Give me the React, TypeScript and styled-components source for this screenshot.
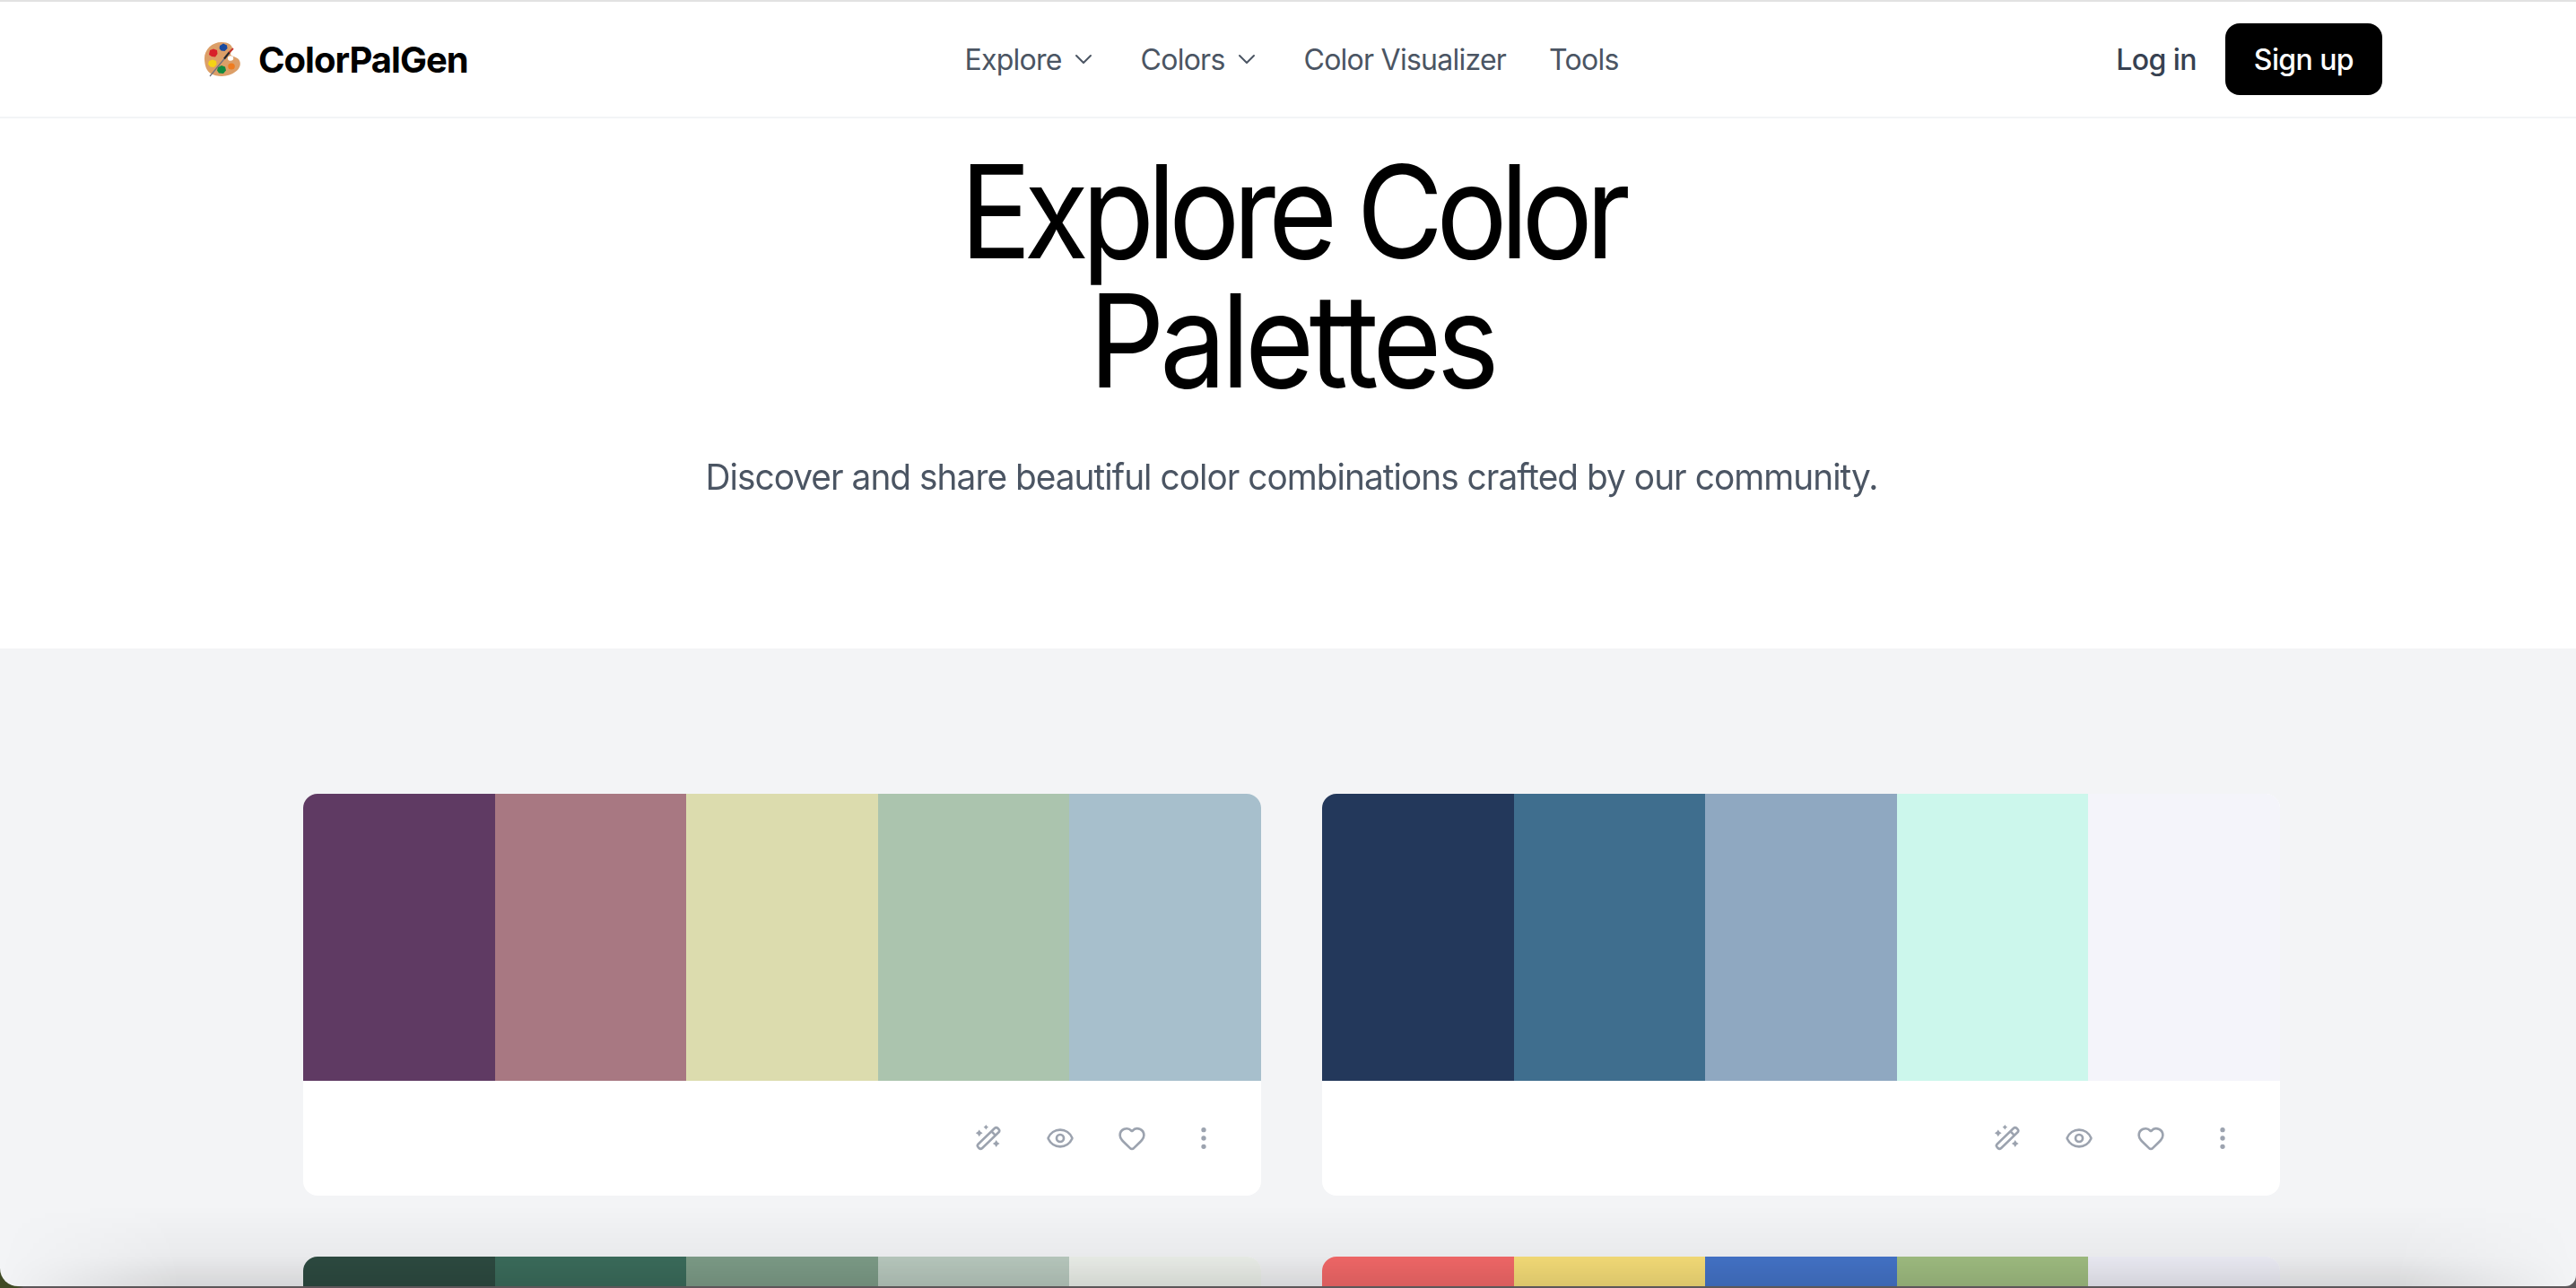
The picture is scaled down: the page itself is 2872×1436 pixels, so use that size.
import React from 'react';
import styled, { createGlobalStyle } from 'styled-components';
import { ChevronDown, Eye, Heart, MoreVertical } from 'lucide-react';

const GlobalStyle = createGlobalStyle`
    html, body {
        margin: 0;
        padding: 0;
        background: linear-gradient(to right, #3f4a24 0, #3f4a24 18px, #5c5759 26px);
    }
    * {
        box-sizing: border-box;
    }
`;

const Frame = styled.div`
    position: relative;
    width: 2872px;
    height: 1434px;
    overflow: hidden;
    border-radius: 0 0 12px 20px;
    background: #f3f4f6;
    font-family: Inter, "Liberation Sans", sans-serif;

    &::after {
        content: '';
        position: absolute;
        left: 0;
        right: 0;
        bottom: 0;
        height: 90px;
        pointer-events: none;
        background: linear-gradient(to top, rgba(0, 0, 0, 0.12), rgba(0, 0, 0, 0.04) 34px, rgba(0, 0, 0, 0));
        mask-image: linear-gradient(to right, transparent, #000 200px, #000 calc(100% - 200px), transparent);
    }
`;

// the captured page was a little wider than the window
const Page = styled.div`
    width: 2880px;
`;

const TopEdge = styled.div`
    height: 2px;
    background: #e2e2e2;
`;

const Nav = styled.nav`
    height: 130px;
    padding: 0 224px;
    display: grid;
    grid-template-columns: 1fr auto 1fr;
    align-items: center;
    background: #fff;
    border-bottom: 2px solid #f3f4f6;
`;

const Brand = styled.div`
    display: flex;
    align-items: center;
    gap: 18px;
    padding-left: 2px;
    font-size: 40px;
    font-weight: 700;
    letter-spacing: -1px;
    color: #000;
`;

const NavLinks = styled.div`
    display: flex;
    align-items: center;
    gap: 48px;
`;

const NavLink = styled.a`
    display: flex;
    align-items: center;
    gap: 8px;
    font-size: 32px;
    font-weight: 400;
    letter-spacing: -0.75px;
    color: #4b5563;
`;

const NavActions = styled.div`
    display: flex;
    align-items: center;
    justify-content: flex-end;
    gap: 32px;
`;

const LogIn = styled.a`
    font-size: 32px;
    font-weight: 500;
    letter-spacing: -0.6px;
    color: #374151;
`;

const SignUp = styled.a`
    display: flex;
    align-items: center;
    height: 80px;
    padding: 0 32px;
    border-radius: 16px;
    background: #000;
    color: #fff;
    font-size: 32px;
    font-weight: 500;
    letter-spacing: -0.6px;
`;

const Hero = styled.header`
    height: 591px;
    background: #fff;
    text-align: center;
    padding-top: 32px;
`;

// the reference has Inter's narrower display cut, the installed Inter does not
const Title = styled.h1`
    margin: 0 auto;
    width: 1000px;
    font-size: 144px;
    line-height: 144px;
    font-weight: 400;
    transform: scaleX(0.92);
    color: #000;
`;

const TitleLine = styled.span<{ $tracking: number }>`
    display: block;
    letter-spacing: ${(p) => p.$tracking}px;
`;

const Lead = styled.p`
    margin: 52px 0 0;
    font-size: 40px;
    line-height: 56px;
    letter-spacing: -1px;
    transform: scaleX(0.97);
    color: #4b5563;
`;

const Gallery = styled.main`
    display: grid;
    grid-template-columns: 1068px 1068px;
    justify-content: center;
    gap: 68px;
    padding-top: 162px;
`;

const Card = styled.article`
    height: 448px;
    border-radius: 16px;
    overflow: hidden;
    background: #fff;
`;

const Swatches = styled.div`
    display: flex;
    height: 320px;
`;

const Swatch = styled.div<{ $color: string }>`
    flex: 1;
    background: ${(p) => p.$color};
`;

const CardActions = styled.div`
    display: flex;
    justify-content: flex-end;
    align-items: center;
    gap: 48px;
    height: 128px;
    padding-right: 48px;
    color: #9ca3af;
`;

const palettes = [
    ['#5f3a63', '#a87882', '#dcdcae', '#abc4ae', '#a7bfcc'],
    ['#23385b', '#3f6e8e', '#8fa8c1', '#ccf7ec', '#f4f4fa'],
    ['#2e4c42', '#3c6e5d', '#7f9f8a', '#bccdc2', '#f0f4ee'],
    ['#f76a6a', '#fae17a', '#4575cb', '#a2c083', '#f1f1fa'],
];

// colour emoji palette, there is no emoji font on the page
const PaletteLogo = () => (
    <svg width="44" height="44" viewBox="6 8 44 44">
        <path d="M8 31C7 20 16 11 27 11C34 11 39 14 39 18C39 21 37 22 37 24C37 27 43 27 46 30C50 35 47 42 41 45C34 50 22 50 15 46C10 43 8.5 37 8 31Z" fill="#dc9f68" />
        <path d="M14 20l4-1.5 4 1.5 .5 4-2.5 3.5-4-.5-3-2z" fill="#d8202a" />
        <path d="M25 15l4-2.5 4 2 .5 3.5-3 3-4-.5-2-2.5z" fill="#1b4b9e" />
        <path d="M13 32l4-1.5 4 1.5 .5 4-3 3-4-.5-2.5-3z" fill="#f5d315" />
        <path d="M23 39l4-2 4 1.5 1 4-3 3.5-5-.5-2-3z" fill="#128a3e" />
        <ellipse cx="37" cy="29" rx="3.2" ry="2.8" fill="#fff" />
        <ellipse cx="38" cy="38" rx="3.8" ry="3.6" fill="#ef7c1f" />
        <path d="M14 49L33 26" stroke="#71717c" strokeWidth="1.2" />
        <path d="M30 29.5L36 22" stroke="#26262c" strokeWidth="2.2" />
        <path d="M35.5 22.5L40 18" stroke="#c4322c" strokeWidth="1.8" />
    </svg>
);

// wand with three sparkles, the lucide one has line sparkles and not these
const WandIcon = () => (
    <svg width="32" height="32" viewBox="0 0 32 32" fill="none" stroke="currentColor" strokeWidth="2.6" strokeLinejoin="round">
        <rect x="0.8" y="12.8" width="30.4" height="6.4" rx="2.6" transform="rotate(-44 16 16)" />
        <path d="M19.5 8.3L23.6 12.6" />
        <g fill="currentColor" stroke="none">
            <path d="M5.7 6.4L7.2 8.8L9.6 10.3L7.2 11.8L5.7 14.2L4.2 11.8L1.8 10.3L4.2 8.8Z" />
            <path d="M13.3 1L14.4 2.6L16 3.7L14.4 4.8L13.3 6.4L12.2 4.8L10.6 3.7L12.2 2.6Z" />
            <path d="M24.7 18.1L26.2 20.5L28.6 22L26.2 23.5L24.7 25.9L23.2 23.5L20.8 22L23.2 20.5Z" />
        </g>
    </svg>
);

const App: React.FC = () => {
    return (
        <Frame>
            <GlobalStyle />
            <Page>
                <TopEdge />
                <Nav>
                    <Brand>
                        <PaletteLogo />
                        ColorPalGen
                    </Brand>
                    <NavLinks>
                        <NavLink>Explore <ChevronDown size={32} strokeWidth={1.5} /></NavLink>
                        <NavLink>Colors <ChevronDown size={32} strokeWidth={1.5} /></NavLink>
                        <NavLink>Color Visualizer</NavLink>
                        <NavLink>Tools</NavLink>
                    </NavLinks>
                    <NavActions>
                        <LogIn>Log in</LogIn>
                        <SignUp>Sign up</SignUp>
                    </NavActions>
                </Nav>
                <Hero>
                    <Title>
                        <TitleLine $tracking={-8.76}>Explore Color</TitleLine>
                        <TitleLine $tracking={-6.2}>Palettes</TitleLine>
                    </Title>
                    <Lead>Discover and share beautiful color combinations crafted by our community.</Lead>
                </Hero>
                <Gallery>
                    {palettes.map((colors, i) => (
                        <Card key={i}>
                            <Swatches>
                                {colors.map((c) => <Swatch key={c} $color={c} />)}
                            </Swatches>
                            <CardActions>
                                <WandIcon />
                                <Eye size={32} strokeWidth={2} />
                                <Heart size={32} strokeWidth={2} />
                                <MoreVertical size={32} strokeWidth={2} />
                            </CardActions>
                        </Card>
                    ))}
                </Gallery>
            </Page>
        </Frame>
    );
};

export default App;
